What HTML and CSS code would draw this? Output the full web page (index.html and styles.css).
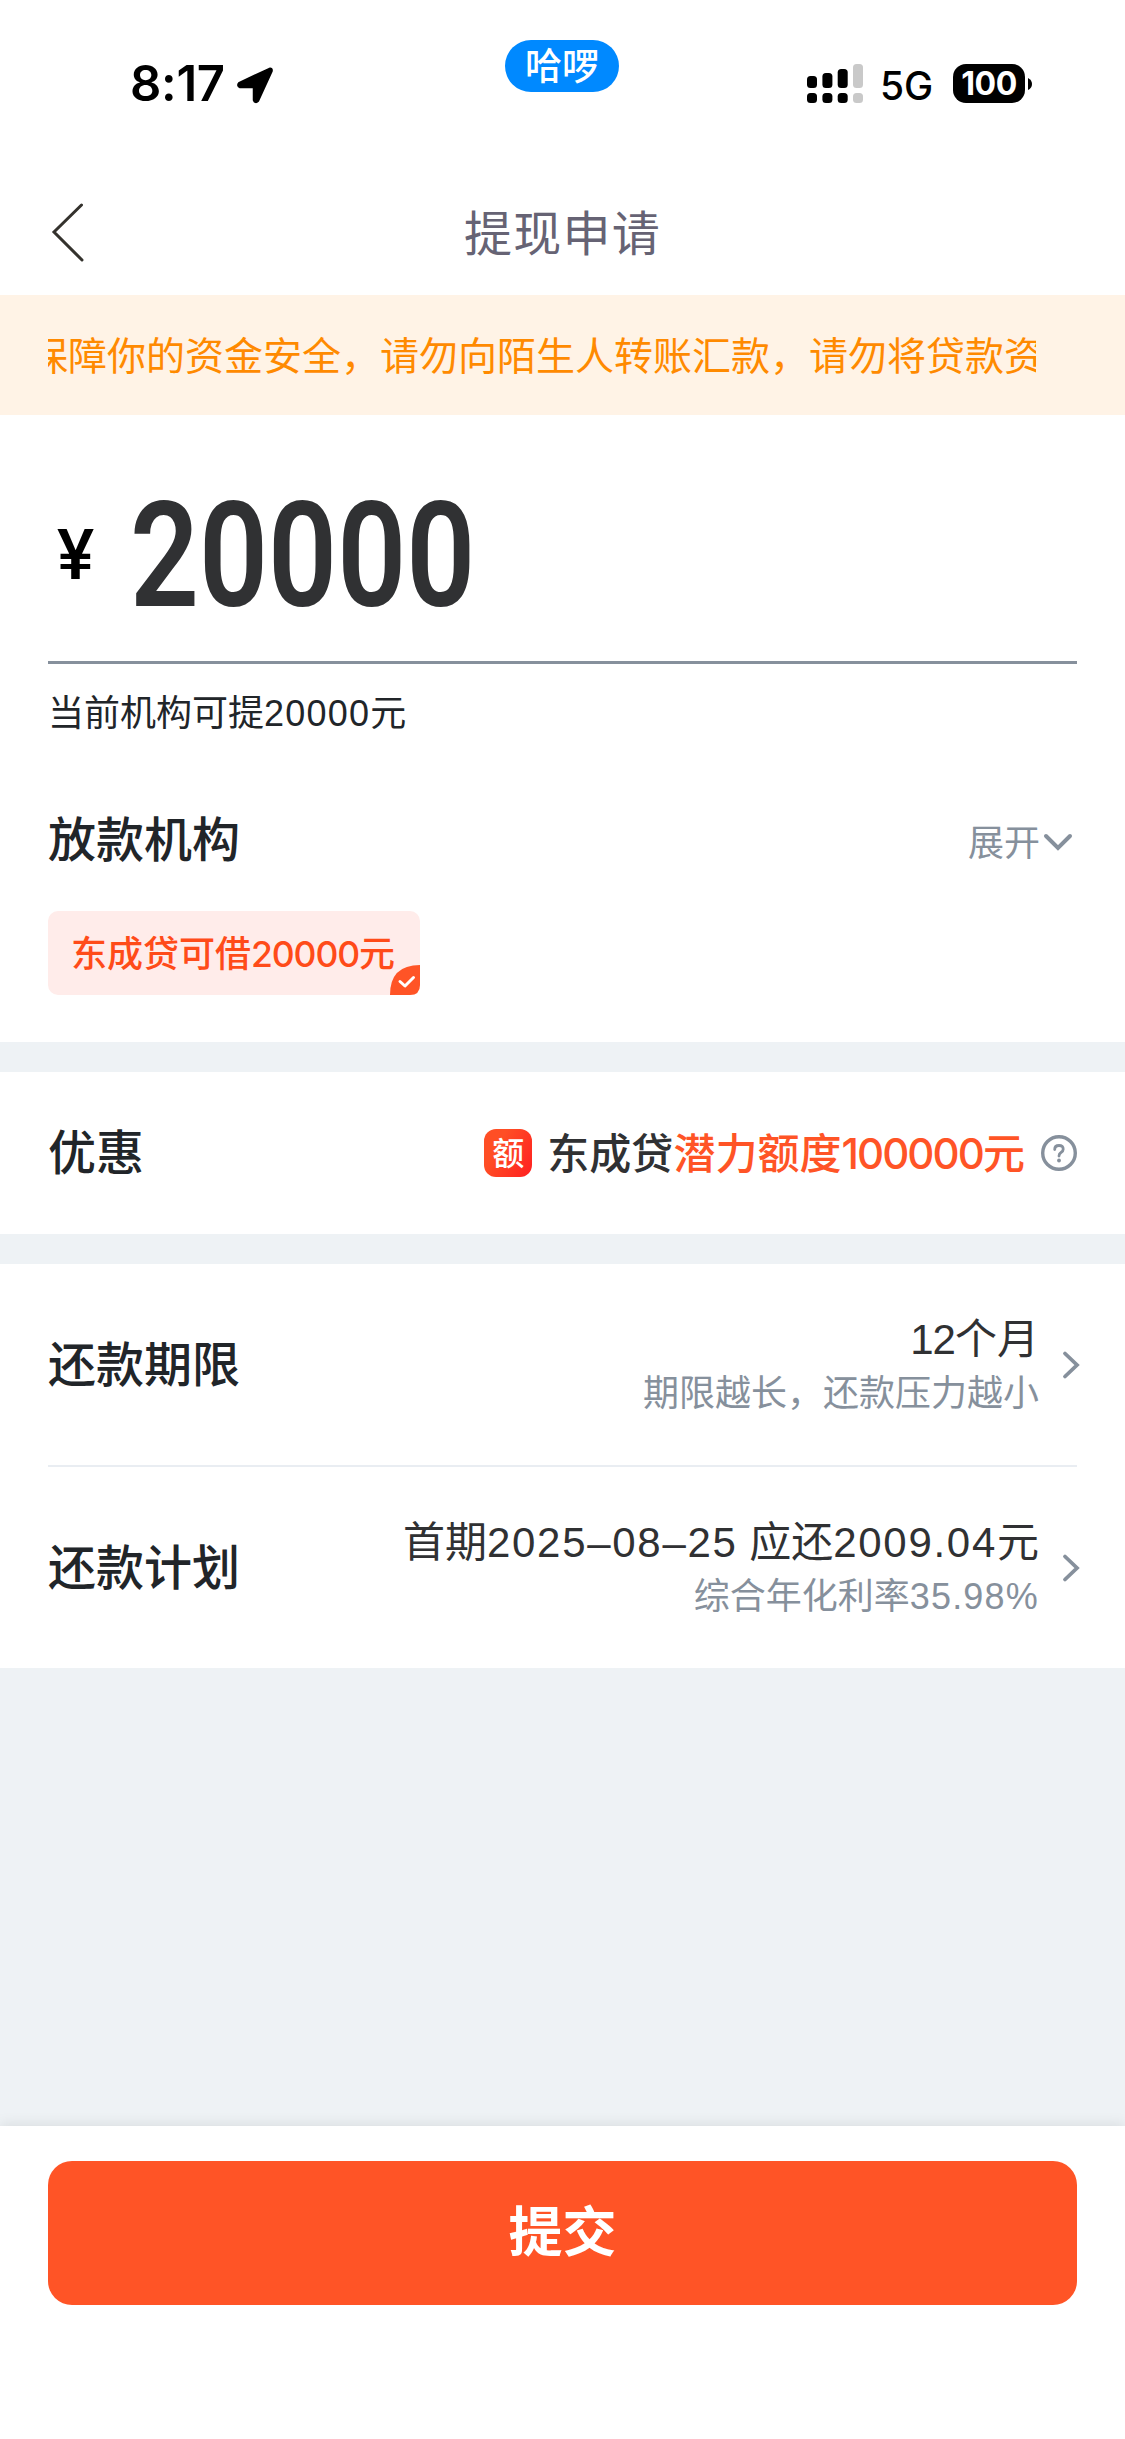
FILE: index.html
```html
<!DOCTYPE html>
<html lang="zh-CN">
<head>
<meta charset="utf-8">
<title>提现申请</title>
<link rel="stylesheet" href="styles.css">
</head>
<body>
<div class="page">
  <header class="status">
    <div class="status-left">
      <span class="time">8:17</span>
      <svg class="location" width="38" height="38" viewBox="0 0 38 38"><path d="M33.500 3.500L3.500 17.500Q2 19.500 4 20.500H18.500V34Q19.500 36.500 21.500 34.500L35 5Q35.500 2.800 33.500 3.500Z" fill="#000" stroke="#000" stroke-width="3.500" stroke-linejoin="round"/></svg>
    </div>
    <span class="island">哈啰</span>
    <div class="status-right">
      <svg class="signal" width="56" height="39" viewBox="0 0 56 39">
        <rect x="0" y="12" width="10" height="12" rx="3.500"/><rect x="0" y="29" width="10" height="10" rx="3.500"/>
        <rect x="15.400" y="9" width="10" height="15" rx="3.500"/><rect x="15.400" y="29" width="10" height="10" rx="3.500"/>
        <rect x="30.700" y="5" width="10" height="19" rx="3.500"/><rect x="30.700" y="29" width="10" height="10" rx="3.500"/>
        <rect x="46" y="0" width="10" height="24" rx="3.500" fill="#c9c9c9"/><rect x="46" y="29" width="10" height="10" rx="3.500" fill="#c9c9c9"/>
      </svg>
      <span class="network">5G</span>
      <span class="battery">100</span>
      <svg class="battery-cap" width="4" height="12" viewBox="0 0 4 12"><path d="M0 0Q4 2 4 6T0 12Z"/></svg>
    </div>
  </header>

  <nav class="navbar">
    <svg class="back" width="36" height="62" viewBox="0 0 36 62"><path d="M31.500 4L4 31L32 59" fill="none" stroke="#34322d" stroke-width="3" stroke-linecap="round"/></svg>
    <h1 class="title">提现申请</h1>
  </nav>

  <div class="notice"><div class="notice-window"><span class="notice-text">保障你的资金安全，请勿向陌生人转账汇款，请勿将贷款资</span></div></div>

  <main>
    <section class="card amount-card">
      <div class="amount"><span class="currency">¥</span><span class="figure">20000</span></div>
      <p class="hint">当前机构可提<span class="num">20000</span>元</p>
      <div class="lender-head">
        <h2 class="label">放款机构</h2>
        <span class="expand">展开<svg width="36" height="24" viewBox="0 0 36 24"><path d="M6 6L18 18L30 6" fill="none" stroke="#86909c" stroke-width="4" stroke-linecap="round"/></svg></span>
      </div>
      <div class="lender">东成贷可借<span class="num-medium">20000</span>元
        <svg class="lender-check" width="30" height="30" viewBox="0 0 30 30"><path d="M0 30Q0 0 30 0V20Q30 30 20 30Z" fill="#ff5426"/><path d="M10 16.500L15 21L23.500 12.500" fill="none" stroke="#fff" stroke-width="3" stroke-linecap="round" stroke-linejoin="round"/></svg>
      </div>
    </section>

    <section class="card offer">
      <h2 class="label">优惠</h2>
      <div class="offer-value">
        <span class="quota-icon">额</span>
        <span class="offer-text">东成贷<em>潜力额度<span class="num-offer">100000</span>元</em></span>
        <svg class="help" width="36" height="36" viewBox="0 0 36 36"><circle cx="18" cy="18" r="16.300" fill="none" stroke="#86909c" stroke-width="3.400"/><path d="M13.700 14.500Q13.700 10.500 18 10.500T22.200 14.200Q22.200 16.200 20 17.500Q18 18.700 18 21" fill="none" stroke="#86909c" stroke-width="2.800" stroke-linecap="round"/><circle cx="18" cy="25.500" r="1.900" fill="#86909c"/></svg>
      </div>
    </section>

    <section class="card terms">
      <div class="term">
        <h2 class="label">还款期限</h2>
        <div class="term-value">
          <span class="primary"><span class="num-month">12</span>个月</span>
          <span class="secondary">期限越长，还款压力越小</span>
        </div>
        <svg class="chevron" width="20" height="30" viewBox="0 0 20 30"><path d="M4 3.500L16 15L4 26.500" fill="none" stroke="#86909c" stroke-width="3.800" stroke-linecap="round"/></svg>
      </div>
      <div class="term">
        <h2 class="label">还款计划</h2>
        <div class="term-value">
          <span class="primary">首期<span class="num-term">2025–08–25</span> 应还<span class="num-term">2009.04</span>元</span>
          <span class="secondary">综合年化利率<span class="num-rate">35.98%</span></span>
        </div>
        <svg class="chevron" width="20" height="30" viewBox="0 0 20 30"><path d="M4 3.500L16 15L4 26.500" fill="none" stroke="#86909c" stroke-width="3.800" stroke-linecap="round"/></svg>
      </div>
    </section>
  </main>

  <footer class="footer"><button class="submit" type="button">提交</button></footer>
</div>
</body>
</html>
```
FILE: styles.css
```css
* { box-sizing: border-box; }
body { margin: 0; background: #eef2f5; font-family: "Liberation Sans", "Noto Sans CJK SC", sans-serif; color: #212529; }
h1, h2, p { margin: 0; font-weight: 400; }
svg { display: block; flex: none; }
.page { width: 1125px; height: 2439px; display: flex; flex-direction: column; overflow: hidden; }

.status { height: 168px; background: #fff; display: grid; grid-template-columns: 505px 114px 506px; align-items: start; }
.status-left { display: flex; padding: 54px 0 0 130px; }
.time { font: 600 49px/60px Inter, sans-serif; color: #000; letter-spacing: -0.300px; width: 106px; white-space: nowrap; }
.location { margin-top: 12px; }
.island { margin-top: 40px; height: 52px; border-radius: 26px; background: #0089ff; color: #fff; font: 500 37px/48px "Noto Sans CJK SC", sans-serif; text-align: center; }
.status-right { display: flex; align-items: flex-start; padding: 64px 0 0 188px; }
.network { font: 500 39px/43px Inter, sans-serif; color: #000; width: 72px; margin-left: 17px; }
.battery { width: 72px; height: 39px; margin-left: 1px; border-radius: 13px; background: #000; color: #fff; font: 700 32px/39px Inter, sans-serif; letter-spacing: -0.500px; text-align: center; }
.battery-cap { margin: 14px 0 0 3px; }

.navbar { height: 127px; background: #fff; display: grid; grid-template-columns: 1fr auto 1fr; align-items: center; padding: 0 50px; }
.title { padding-bottom: 4px; font: 400 48px/68px "Noto Sans CJK SC", sans-serif; letter-spacing: 1.300px; color: #666374; }

.notice { height: 120px; background: #fff3e6; padding: 0 89px 4px 48px; display: flex; align-items: center; }
.notice-window { width: 988px; overflow: hidden; }
.notice-text { display: block; margin-left: -19px; white-space: nowrap; font: 400 39px/60px "Noto Sans CJK SC", sans-serif; color: #ff8a00; }

main { flex: 1; display: flex; flex-direction: column; gap: 30px; }
.card { background: #fff; padding: 0 48px; }
.label { padding-bottom: 7px; font: 500 48px/65px "Noto Sans CJK SC", sans-serif; }
.amount-card { height: 627px; }
.amount { height: 249px; border-bottom: 3px solid #86909c; display: flex; align-items: center; padding: 38px 0 0 8px; }
.currency { font: 500 70px/80px Roboto, sans-serif; color: #000; width: 74px; padding: 0 0 4px 1px; }
.figure { font: 600 146px/150px Roboto, sans-serif; color: #303133; transform: scaleX(0.828); transform-origin: left; }
.hint { font-size: 36px; line-height: 54px; margin-top: 23px; }
.num { letter-spacing: 1.200px; }
.lender-head { display: flex; justify-content: space-between; align-items: center; margin-top: 63px; }
.expand { display: flex; align-items: center; margin-right: 1px; font: 400 36px/54px "Noto Sans CJK SC", sans-serif; color: #86909c; }
.expand svg { margin-top: 4px; }
.lender { position: relative; width: 372px; height: 84px; margin-top: 35px; padding-left: 23px; border-radius: 10px; background: #ffecea; color: #ff4b19; font: 500 36px/80px "Noto Sans CJK SC", sans-serif; white-space: nowrap; }
.num-medium { font-family: Inter, sans-serif; font-size: 35.500px; letter-spacing: -1.100px; }
.lender-check { position: absolute; right: 0; bottom: 0; }

.offer { height: 162px; display: flex; align-items: center; justify-content: space-between; }
.offer-value { display: flex; align-items: center; }
.quota-icon { width: 48px; height: 48px; border-radius: 12px; background: linear-gradient(120deg, #ff4e25 30%, #ff2020); color: #fff; font: 500 32px/45px "Noto Sans CJK SC", sans-serif; text-align: center; }
.offer-text { margin: 0 16px 0 15px; padding-bottom: 3px; font: 500 42px/57px "Noto Sans CJK SC", sans-serif; color: #303133; }
.offer-text em { font-style: normal; color: #ff5426; }
.num-offer { font-family: Inter, sans-serif; letter-spacing: -1.900px; }

.terms { height: 404px; }
.term { height: 203px; display: flex; align-items: center; border-bottom: 2px solid #e9edf2; }
.term:last-child { height: 201px; border-bottom: 0; }
.term-value { margin-left: auto; display: flex; flex-direction: column; align-items: flex-end; padding-top: 2px; }
.primary { font-size: 42px; line-height: 55px; color: #303133; }
.secondary { font-size: 36px; line-height: 53px; color: #86909c; }
.num-month { letter-spacing: -1px; }
.num-term { letter-spacing: 1.700px; }
.num-rate { letter-spacing: 1.200px; }
.chevron { margin: 0 -4px 0 22px; }

.footer { height: 313px; background: #fff; padding: 35px 48px 0; box-shadow: 0 -3px 12px rgba(0, 0, 0, 0.080); }
.submit { display: block; width: 100%; height: 144px; border: 0; border-radius: 24px; padding: 0 0 8px; background: #ff5426; color: #fff; font: 700 54px/80px "Noto Sans CJK SC", sans-serif; }
```
